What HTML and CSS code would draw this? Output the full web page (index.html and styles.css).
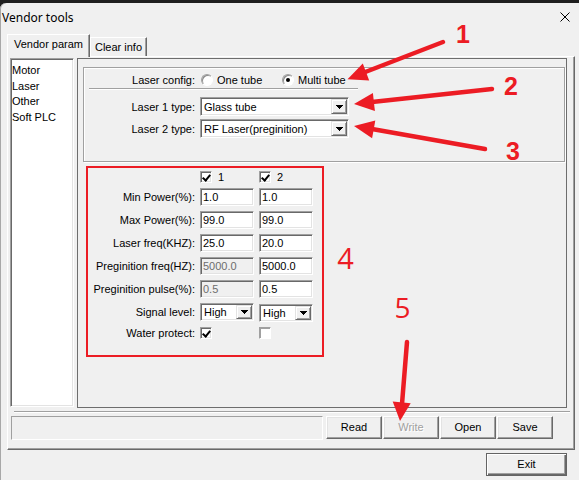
FILE: index.html
```html
<!DOCTYPE html>
<html lang="en">
<head>
    <meta charset="UTF-8">
    <meta name="viewport" content="width=device-width, initial-scale=1.0">
    <title>Vendor tools</title>
    <link rel="stylesheet" href="styles.css">
</head>
<body>
    <div class="window">
        <div class="titlebar">
            <span class="title">Vendor tools</span>
            <span class="close">
                <svg width="10" height="10" viewBox="0 0 10 10"><path d="M0.5 0.5L9.5 9.5M9.5 0.5L0.5 9.5" stroke="#000" stroke-width="1" fill="none"/></svg>
            </span>
        </div>

        <div class="tabs">
            <div class="tab active">Vendor param</div>
            <div class="tab">Clear info</div>
        </div>

        <div class="tab-panel">
            <div class="main">
                <ul class="menu-list">
                    <li>Motor</li>
                    <li>Laser</li>
                    <li>Other</li>
                    <li>Soft PLC</li>
                </ul>

                <div class="param-panel">
                    <div class="group">
                        <div class="form-row config-row">
                            <span class="form-label">Laser config:</span>
                            <label class="radio"><span class="radio-dot"></span>One tube</label>
                            <label class="radio checked"><span class="radio-dot"></span>Multi tube</label>
                        </div>
                        <div class="separator"></div>
                        <div class="form-row type-row">
                            <span class="form-label">Laser 1 type:</span>
                            <div class="combo wide">
                                <span class="combo-text">Glass tube</span>
                                <span class="combo-btn"><svg width="7" height="4" viewBox="0 0 7 4"><path d="M0 0H7V1H6V2H5V3H4V4H3V3H2V2H1V1H0Z"/></svg></span>
                            </div>
                        </div>
                        <div class="form-row type-row">
                            <span class="form-label">Laser 2 type:</span>
                            <div class="combo wide">
                                <span class="combo-text">RF Laser(preginition)</span>
                                <span class="combo-btn"><svg width="7" height="4" viewBox="0 0 7 4"><path d="M0 0H7V1H6V2H5V3H4V4H3V3H2V2H1V1H0Z"/></svg></span>
                            </div>
                        </div>
                    </div>

                    <div class="tube-grid">
                        <span></span>
                        <label class="tube-head"><span class="check on"></span>1</label>
                        <label class="tube-head"><span class="check on"></span>2</label>

                        <span class="grid-label">Min Power(%):</span>
                        <div class="field">1.0</div>
                        <div class="field">1.0</div>

                        <span class="grid-label">Max Power(%):</span>
                        <div class="field">99.0</div>
                        <div class="field">99.0</div>

                        <span class="grid-label">Laser freq(KHZ):</span>
                        <div class="field">25.0</div>
                        <div class="field">20.0</div>

                        <span class="grid-label">Preginition freq(HZ):</span>
                        <div class="field disabled">5000.0</div>
                        <div class="field">5000.0</div>

                        <span class="grid-label">Preginition pulse(%):</span>
                        <div class="field disabled">0.5</div>
                        <div class="field">0.5</div>

                        <span class="grid-label">Signal level:</span>
                        <div class="combo">
                            <span class="combo-text">High</span>
                            <span class="combo-btn"><svg width="7" height="4" viewBox="0 0 7 4"><path d="M0 0H7V1H6V2H5V3H4V4H3V3H2V2H1V1H0Z"/></svg></span>
                        </div>
                        <div class="combo lower">
                            <span class="combo-text">High</span>
                            <span class="combo-btn"><svg width="7" height="4" viewBox="0 0 7 4"><path d="M0 0H7V1H6V2H5V3H4V4H3V3H2V2H1V1H0Z"/></svg></span>
                        </div>

                        <span class="grid-label">Water protect:</span>
                        <span class="check on"></span>
                        <span class="check pale"></span>
                    </div>
                </div>
            </div>

            <div class="divider"></div>

            <div class="action-bar">
                <div class="status-field"></div>
                <button class="btn">Read</button>
                <button class="btn" disabled>Write</button>
                <button class="btn">Open</button>
                <button class="btn">Save</button>
            </div>
        </div>

        <div class="footer">
            <button class="btn exit">Exit</button>
        </div>
    </div>

    <!-- red markup drawn over the dialog -->
    <svg class="notes" width="579" height="480" viewBox="0 0 579 480">
        <rect x="87" y="167" width="236" height="189" fill="none" stroke="#ec1c24" stroke-width="2"/>

        <g stroke="#ec1c24" stroke-width="4.5" stroke-linecap="round" fill="none">
            <line x1="443" y1="42" x2="364" y2="72.5"/>
            <line x1="492" y1="89" x2="372" y2="102"/>
            <line x1="485" y1="149" x2="372" y2="129"/>
            <line x1="407" y1="342" x2="402" y2="404"/>
        </g>
        <g fill="#ec1c24">
            <polygon points="347.5,79.3 362.8,63.6 369.2,80.4"/>
            <polygon points="354,104 372.9,92.9 374.9,110.9"/>
            <polygon points="354,126 375.3,120.6 372.1,138.3"/>
            <polygon points="400,421 392.7,401.6 410.7,403.2"/>
        </g>

        <g fill="#ec1c24" font-family="Liberation Sans, Arial, sans-serif" font-weight="bold" font-size="25" text-anchor="middle">
            <text x="463" y="43">1</text>
            <text x="511" y="95">2</text>
            <text x="513" y="159.5">3</text>
        </g>
        <g fill="#ec1c24" font-family="Open Sans, sans-serif" text-anchor="middle">
            <text x="345.5" y="269" font-size="29">4</text>
            <text x="402.5" y="318" font-size="28">5</text>
        </g>
    </svg>
</body>
</html>
```

FILE: styles.css
```css
* {
    box-sizing: border-box;
}

html, body {
    margin: 0;
    padding: 0;
}

body {
    position: relative;
    width: 579px;
    height: 480px;
    overflow: hidden;
    background-color: #1f1f1f;
    font-family: "Liberation Sans", Arial, sans-serif;
    font-size: 11px;
    color: #000;
}

.window {
    margin-top: 3px;
    height: 477px;
    background-color: #f0f0f0;
    border-top-left-radius: 6px;
    box-shadow: inset 1px 0 #a8a8a8;
}

.titlebar {
    display: flex;
    justify-content: space-between;
    align-items: center;
    height: 31px;
    padding: 0 9px 3px 2px;
}

.title {
    font-family: "Noto Sans", sans-serif;
    font-size: 12px;
}

.close svg {
    display: block;
}

/* tab strip */
.tabs {
    display: flex;
    align-items: flex-end;
    height: 22px;
    padding-left: 7px;
}

.tab {
    display: flex;
    align-items: center;
    justify-content: center;
    background-color: #f0f0f0;
    border-top: 1px solid #fff;
    border-left: 1px solid #fff;
    border-right: 1px solid #696969;
    box-shadow: inset -1px 0 #a0a0a0;
    width: 57px;
    height: 19px;
    padding-bottom: 1px;
}

.tab.active {
    position: relative;
    z-index: 1;
    width: 83px;
    height: 23px;
    margin-bottom: -1px;
    padding-bottom: 4px;
}

.tab-panel {
    margin-left: 7px;
    width: 568px;
    height: 394px;
    border-top: 1px solid #fff;
    border-left: 1px solid #fff;
    border-right: 1px solid #696969;
    border-bottom: 1px solid #696969;
    box-shadow: inset -1px -1px #a0a0a0;
    padding: 1px 0 0 2px;
}

.main {
    display: flex;
    gap: 3px;
    height: 350px;
}

.menu-list {
    list-style: none;
    margin: 0;
    padding: 4px 0 0 0;
    width: 64px;
    height: 349px;
    background-color: #fff;
    border: 1px solid;
    border-color: #a0a0a0 #fff #fff #a0a0a0;
    box-shadow: inset 1px 1px #696969, inset -1px -1px #e3e3e3;
    line-height: 15.7px;
}

.menu-list li {
    padding-left: 1px;
}

.param-panel {
    width: 490px;
    height: 350px;
    border: 1px solid #6d6d6d;
}

/* etched group with the tube type selectors */
.group {
    margin: 8px 1px 0 5px;
    height: 95px;
    border: 1px solid #a0a0a0;
    box-shadow: inset 1px 1px #fff, 1px 1px #fff;
}

.form-row {
    display: flex;
    align-items: center;
}

.form-label {
    width: 111px;
    margin-right: 5px;
    text-align: right;
    white-space: nowrap;
}

.config-row {
    height: 20px;
    padding-top: 4px;
}

.config-row .form-label {
    margin-right: 6px;
}

.radio {
    display: flex;
    align-items: center;
    gap: 4px;
    width: 81px;
}

.radio-dot {
    position: relative;
    width: 12px;
    height: 12px;
    border-radius: 50%;
    background-color: #fff;
    border: 1px solid;
    border-color: #a0a0a0 #fff #fff #a0a0a0;
    box-shadow: inset 1px 1px #8a8a8a;
}

.radio.checked .radio-dot::after {
    content: "";
    position: absolute;
    left: 3px;
    top: 3px;
    width: 4px;
    height: 4px;
    border-radius: 50%;
    background-color: #000;
}

.separator {
    margin-left: 5px;
    width: 269px;
    height: 2px;
    border-top: 1px solid #a0a0a0;
    border-bottom: 1px solid #fff;
}

.type-row {
    margin-top: 3px;
}

.separator + .type-row {
    margin-top: 7px;
}

.combo {
    display: flex;
    align-items: stretch;
    height: 18px;
    background-color: #fff;
    border: 1px solid;
    border-color: #a0a0a0 #fff #fff #a0a0a0;
    box-shadow: inset 1px 1px #696969, inset -1px -1px #e3e3e3;
    padding: 1px 1px 1px 2px;
}

.combo.wide {
    width: 149px;
    height: 19px;
}

.combo.lower {
    margin-top: 2px;
}

.combo-text {
    flex: 1;
    display: flex;
    align-items: center;
    padding-left: 1px;
    white-space: nowrap;
    overflow: hidden;
}

.combo-btn {
    display: flex;
    align-items: center;
    justify-content: center;
    width: 16px;
    background-color: #f0f0f0;
    border: 1px solid;
    border-color: #e3e3e3 #696969 #696969 #e3e3e3;
    box-shadow: inset 1px 1px #fff, inset -1px -1px #a0a0a0;
}

.combo-btn svg {
    display: block;
}

/* per tube values */
.tube-grid {
    display: grid;
    grid-template-columns: 117px 54px 54px;
    grid-template-rows: 12px repeat(6, 18px) 13px;
    column-gap: 5px;
    row-gap: 5px;
    margin-top: 9px;
    align-items: center;
}

.grid-label {
    text-align: right;
    white-space: nowrap;
}

.tube-head {
    display: flex;
    align-items: center;
    gap: 6px;
}

.field {
    display: flex;
    align-items: center;
    height: 18px;
    padding-left: 2px;
    background-color: #fff;
    border: 1px solid;
    border-color: #a0a0a0 #fff #fff #a0a0a0;
    box-shadow: inset 1px 1px #696969, inset -1px -1px #e3e3e3;
}

.field.disabled {
    background-color: #f0f0f0;
    color: #6d6d6d;
}

.check {
    position: relative;
    display: block;
    width: 12px;
    height: 12px;
    background-color: #fff;
    border: 1px solid;
    border-color: #a0a0a0 #fff #fff #a0a0a0;
    box-shadow: inset 1px 1px #696969, inset -1px -1px #e3e3e3;
}

.check.pale {
    box-shadow: inset 1px 1px #a0a0a0;
}

.check.on::after {
    content: "";
    position: absolute;
    left: 3px;
    top: 1px;
    width: 3px;
    height: 6px;
    border-right: 2px solid #000;
    border-bottom: 2px solid #000;
    transform: rotate(40deg);
}

/* bottom area */
.divider {
    margin: 3px 0 0 4px;
    width: 556px;
    height: 2px;
    border-top: 1px solid #a0a0a0;
    border-bottom: 1px solid #fff;
}

.action-bar {
    display: flex;
    margin: 3px 0 0 1px;
}

.status-field {
    width: 312px;
    height: 24px;
    margin-right: 3px;
    border: 1px solid;
    border-color: #a0a0a0 #fff #fff #a0a0a0;
}

.btn {
    font: inherit;
    color: #000;
    width: 56px;
    height: 23px;
    margin-right: 1px;
    padding: 0 0 1px 0;
    background-color: #f0f0f0;
    border: 1px solid;
    border-color: #fff #696969 #696969 #fff;
    box-shadow: inset -1px -1px #a0a0a0, inset 1px 1px #e3e3e3;
}

.btn:disabled {
    color: #a0a0a0;
    text-shadow: 1px 1px #fff;
}

.footer {
    margin-top: 3px;
}

.btn.exit {
    margin-left: 486px;
    width: 81px;
    border: 1px solid #646464;
    box-shadow: inset 1px 1px #fff, inset -1px -1px #696969, inset -2px -2px #a0a0a0;
}

.notes {
    position: absolute;
    top: 0;
    left: 0;
    pointer-events: none;
}
```
